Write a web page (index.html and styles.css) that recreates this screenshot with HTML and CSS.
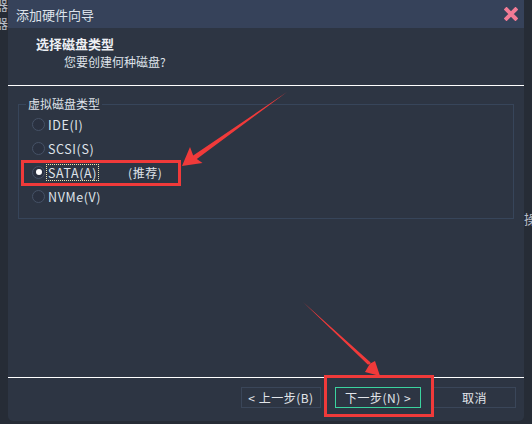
FILE: index.html
```html
<!DOCTYPE html>
<html lang="zh-CN">
<head>
<meta charset="utf-8">
<title>添加硬件向导</title>
<link rel="stylesheet" href="styles.css">
</head>
<body>
<div class="side side-left"><span>器</span><span>器</span></div>
<div class="window">
  <div class="titlebar">
    <span class="title">添加硬件向导</span>
    <svg class="close" width="14" height="14" viewBox="0 0 14 14"><path d="M2.5 2.5 L11.5 11.5 M11.5 2.5 L2.5 11.5" stroke="#f27b95" stroke-width="4" stroke-linecap="square"/></svg>
  </div>
  <div class="header">
    <div class="h-title">选择磁盘类型</div>
    <div class="h-sub">您要创建何种磁盘?</div>
  </div>
  <div class="content">
    <fieldset class="group">
      <legend>虚拟磁盘类型</legend>
      <div class="options">
        <div class="opt"><span class="radio"></span><span class="label">IDE(I)</span></div>
        <div class="opt"><span class="radio"></span><span class="label">SCSI(S)</span></div>
        <div class="opt"><span class="radio checked"></span><span class="label focus">SATA(A)</span><span class="rec">(推荐)</span></div>
        <div class="opt"><span class="radio"></span><span class="label">NVMe(V)</span></div>
      </div>
    </fieldset>
  </div>
  <div class="footer">
    <div class="btn btn-prev">&lt; 上一步(B)</div>
    <div class="btn btn-next">下一步(N) &gt;</div>
    <div class="btn btn-cancel">取消</div>
  </div>
</div>
<div class="side side-right"><span>操</span></div>
<svg class="annot" width="532" height="424" viewBox="0 0 532 424">
  <rect x="22.5" y="161.5" width="157" height="23" fill="none" stroke="#f03a3a" stroke-width="3"/>
  <rect x="325.5" y="376.5" width="107" height="39" fill="none" stroke="#f03a3a" stroke-width="3"/>
  <polygon points="287,92 193.2,155.5 190,147 182,166 202.5,163 196.8,159" fill="#f03a3a"/>
  <polygon points="303,302 368,364.8 375,361 380,376 365,372 370.6,362.6" fill="#f03a3a"/>
</svg>
</body>
</html>
```
FILE: styles.css
```css
* { box-sizing: border-box; }
html, body { margin: 0; padding: 0; }
body {
  width: 532px;
  height: 424px;
  overflow: hidden;
  display: flex;
  background: #262c36;
  font-family: "Noto Sans CJK SC", "Noto Sans", sans-serif;
  font-size: 12px;
  color: #dfe3ea;
  position: relative;
}
.side {
  width: 8px;
  overflow: hidden;
  display: flex;
  flex-direction: column;
  color: #b8bec8;
  font-size: 13px;
  line-height: 18px;
}
.side-left span { margin-left: -5px; }
.side-left span:first-child { margin-top: -4px; }
.side-right { padding-top: 210px; }
.window {
  width: 516px;
  height: 421px;
  background: #2d3543;
  border-radius: 0 0 5px 5px;
  display: flex;
  flex-direction: column;
}
.titlebar {
  height: 28px;
  background: #36425a;
  display: flex;
  align-items: center;
  justify-content: space-between;
  padding: 0 6px 0 8px;
}
.title { font-size: 13px; color: #dde2ea; }
.header {
  height: 58px;
  border-bottom: 1px solid #ffffff;
  padding: 6px 0 0 28px;
}
.h-title { font-size: 13px; font-weight: bold; line-height: 19px; color: #eef0f4; }
.h-sub { margin-left: 28px; line-height: 17px; color: #dfe3ea; }
.content {
  flex: 1;
  padding: 11px 10px 0 10px;
}
.group {
  margin: 0;
  padding: 0;
  border: 1px solid #37455a;
  width: 496px;
  height: 122px;
}
.group legend {
  margin-left: 7px;
  padding: 0 2px;
  line-height: 14px;
  color: #dfe3ea;
}
.options { padding-top: 1px; }
.opt {
  height: 24px;
  display: flex;
  align-items: center;
  padding-left: 13px;
}
.radio {
  width: 13px;
  height: 13px;
  border-radius: 50%;
  border: 1px solid #465267;
  background: #2a3140;
  margin-right: 2px;
  display: flex;
  align-items: center;
  justify-content: center;
}
.radio.checked::after {
  content: "";
  width: 6px;
  height: 6px;
  border-radius: 50%;
  background: #ffffff;
}
.label {
  padding: 0 1px;
  line-height: 15px;
  font-size: 12.5px;
  letter-spacing: 0.6px;
}
.label.focus { outline: 1px dotted #efe6b0; }
.rec { margin-left: 30px; letter-spacing: 0.5px; }
.footer {
  height: 44px;
  border-top: 1px solid #ffffff;
  display: flex;
  padding: 9px 0 0 233px;
}
.btn {
  height: 21px;
  border: 1px solid #3a4659;
  display: flex;
  align-items: center;
  justify-content: center;
  color: #e2e5ea;
  letter-spacing: 0.5px;
}
.btn-prev { width: 80px; }
.btn-next { width: 86px; margin-left: 14px; border-color: #3bd39f; }
.btn-cancel { width: 83px; margin-left: 12px; }
.annot { position: absolute; left: 0; top: 0; pointer-events: none; }
```
